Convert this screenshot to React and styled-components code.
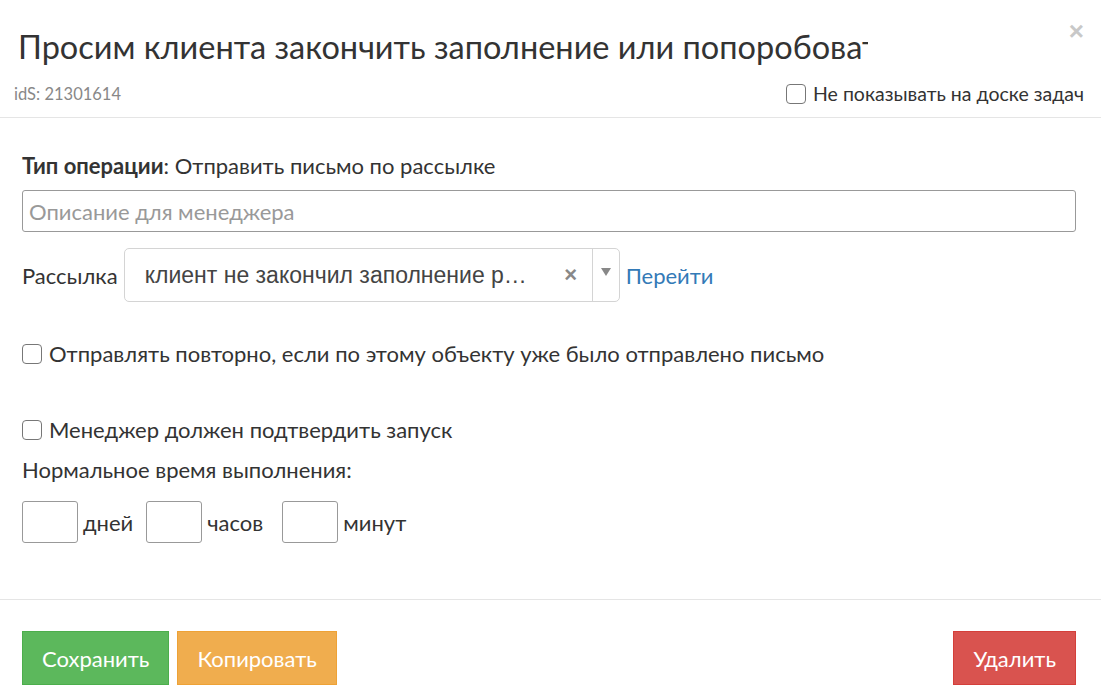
import styled, { createGlobalStyle } from "styled-components";

const Global = createGlobalStyle`
  html, body { margin: 0; padding: 0; background: #fff; }
  body {
    font-family: Lato, "Noto Sans", sans-serif;
    color: #333;
  }
  * { box-sizing: border-box; }
`;

const Modal = styled.div`
  width: 1101px;
  height: 695px;
  background: #fff;
  overflow: hidden;
`;

const Header = styled.div`
  position: relative;
  padding: 26px 17px 0 14px;
  height: 118px;
  border-bottom: 1px solid #e5e5e5;
`;

const Title = styled.h4`
  margin: 0 0 0 4px;
  width: 850px;
  white-space: nowrap;
  overflow: hidden;
  font-size: 32.5px;
  font-weight: 400;
  line-height: 42px;
  color: #333;
`;

const Close = styled.button`
  position: absolute;
  top: 18px;
  right: 17px;
  border: 0;
  background: none;
  padding: 0;
  font-size: 26px;
  font-weight: 700;
  color: #c8c8c8;
  line-height: 1;
  font-family: "Liberation Sans", sans-serif;
`;

const SubRow = styled.div`
  display: flex;
  justify-content: space-between;
  align-items: center;
  margin-top: 14px;
`;

const Ids = styled.span`
  font-size: 16.5px;
  color: #888;
`;

const Check = styled.label`
  display: flex;
  align-items: center;
  gap: 7px;
  font-size: ${(p) => p.size || 22}px;
  color: #333;
  margin-top: ${(p) => p.mt || 0}px;
`;

const Box = styled.span`
  width: 20px;
  height: 20px;
  border: 1px solid #777;
  border-radius: 4px;
  background: #fff;
  flex: none;
`;

const Body = styled.div`
  padding: 34px 25px 0 22px;
  height: 482px;
  border-bottom: 1px solid #e5e5e5;
`;

const Line = styled.div`
  font-size: 22px;
  line-height: 28px;
  margin-top: ${(p) => p.mt || 0}px;
  margin-bottom: ${(p) => p.mb || 0}px;
`;

const TextInput = styled.div`
  height: 42px;
  border: 1px solid #999;
  border-radius: 3px;
  padding: 0 6px;
  display: flex;
  align-items: center;
  font-size: 22px;
  color: #999;
`;

const SelectRow = styled.div`
  display: flex;
  align-items: center;
  margin-top: 16px;
  gap: 6px;
  font-size: 22px;
`;

const Select = styled.div`
  width: 496px;
  height: 54px;
  border: 1px solid #d4d4d4;
  border-radius: 5px;
  display: flex;
  align-items: center;
`;

const SelectValue = styled.div`
  flex: 1;
  padding-left: 20px;
  font-family: "Liberation Sans", Arial, sans-serif;
  font-size: 23px;
  color: #444;
  white-space: nowrap;
`;

const Clear = styled.span`
  width: 42px;
  text-align: center;
  font-family: "Liberation Sans", Arial, sans-serif;
  font-weight: 700;
  font-size: 22px;
  color: #888;
`;

const Arrow = styled.span`
  width: 27px;
  height: 100%;
  border-left: 1px solid #d4d4d4;
  display: flex;
  justify-content: center;
  align-items: center;
  &::after {
    content: "";
    border-left: 5px solid transparent;
    border-right: 5px solid transparent;
    border-top: 8px solid #888;
    margin-top: -6px;
  }
`;

const Link = styled.a`
  color: #337ab7;
  text-decoration: none;
  font-size: 22px;
`;

const TimeRow = styled.div`
  display: flex;
  align-items: center;
  font-size: 22px;
`;

const SmallInput = styled.div`
  width: 56px;
  height: 42px;
  border: 1px solid #999;
  border-radius: 3px;
  margin-right: 5px;
`;

const Unit = styled.span`
  margin-right: ${(p) => p.mr}px;
`;

const Footer = styled.div`
  display: flex;
  align-items: center;
  padding: 31px 25px 0 22px;
  gap: 8px;
`;

const Btn = styled.button`
  height: 54px;
  padding: 0 19px;
  border: 1px solid ${(p) => p.border};
  background: ${(p) => p.bg};
  color: #fff;
  font-family: Lato, "Noto Sans", sans-serif;
  font-size: 22px;
  border-radius: 0;
  margin-left: ${(p) => (p.right ? "auto" : "0")};
`;

export default function App() {
  return (
    <Modal>
      <Global />
      <Header>
        <Title>Просим клиента закончить заполнение или попоробовать снова</Title>
        <Close>×</Close>
        <SubRow>
          <Ids>idS: 21301614</Ids>
          <Check size={19.5}>
            <Box />
            Не показывать на доске задач
          </Check>
        </SubRow>
      </Header>
      <Body>
        <Line mb={10}>
          <b>Тип операции</b>: Отправить письмо по рассылке
        </Line>
        <TextInput>Описание для менеджера</TextInput>
        <SelectRow>
          Рассылка
          <Select>
            <SelectValue>клиент не закончил заполнение р…</SelectValue>
            <Clear>×</Clear>
            <Arrow />
          </Select>
          <Link href="#">Перейти</Link>
        </SelectRow>
        <Check mt={38}>
          <Box />
          Отправлять повторно, если по этому объекту уже было отправлено письмо
        </Check>
        <Check mt={49}>
          <Box />
          Менеджер должен подтвердить запуск
        </Check>
        <Line mt={13} mb={17}>Нормальное время выполнения:</Line>
        <TimeRow>
          <SmallInput />
          <Unit mr={13}>дней</Unit>
          <SmallInput />
          <Unit mr={19}>часов</Unit>
          <SmallInput />
          <Unit mr={0}>минут</Unit>
        </TimeRow>
      </Body>
      <Footer>
        <Btn bg="#5cb85c" border="#4cae4c">Сохранить</Btn>
        <Btn bg="#f0ad4e" border="#eea236">Копировать</Btn>
        <Btn bg="#d9534f" border="#d43f3a" right>Удалить</Btn>
      </Footer>
    </Modal>
  );
}
